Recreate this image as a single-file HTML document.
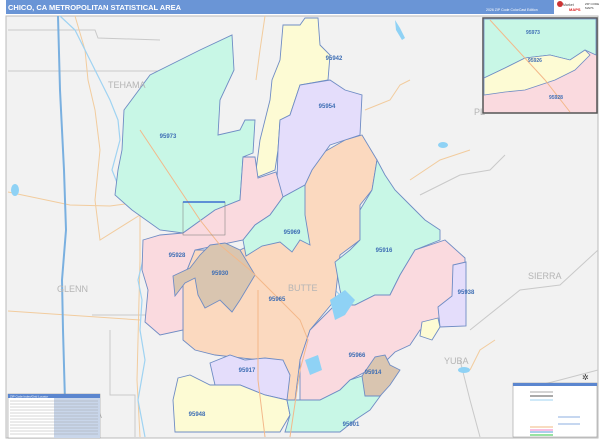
<!DOCTYPE html>
<html><head><meta charset="utf-8"><style>
html,body{margin:0;padding:0;width:600px;height:440px;overflow:hidden;background:#fff;font-family:"Liberation Sans",sans-serif}
</style></head><body>
<svg width="600" height="440" viewBox="0 0 600 440" xmlns="http://www.w3.org/2000/svg" font-family="Liberation Sans, sans-serif">
<rect width="600" height="440" fill="#ffffff"/>
<!-- header -->
<rect x="6" y="0" width="594" height="14" fill="#6a95d6"/>
<text x="8" y="10" font-size="7.5" font-weight="bold" fill="#fff">CHICO, CA METROPOLITAN STATISTICAL AREA</text>
<text x="486" y="11" font-size="3.5" fill="#fff">2026 ZIP Code ColorCast Edition</text>
<rect x="554" y="0" width="46" height="14" fill="#fff"/>
<circle cx="560" cy="4" r="3" fill="#c33"/>
<text x="563" y="6" font-size="3.5" fill="#444">Market</text>
<text x="569" y="11" font-size="4" font-weight="bold" fill="#d22">MAPS</text>
<text x="585" y="5" font-size="3" fill="#333">ZIP CODE</text>
<text x="585" y="9" font-size="3" fill="#333">MAPS</text>
<!-- map bg -->
<rect x="6" y="16" width="592" height="422" fill="#f2f2f2" stroke="#bbb" stroke-width="1"/>
<!-- county lines -->
<g fill="none" stroke="#c9c9c9" stroke-width="1">
<path d="M8 30 L95 30 L98 38 L160 40"/>
<path d="M8 71 L175 71"/>
<path d="M92 315 L175 315"/>
<path d="M135 437 L135 395 L110 395 L110 330"/>
<path d="M420 195 L460 175 L490 170 L505 155"/>
<path d="M470 330 L520 290 L560 285 L598 250"/>
<path d="M400 250 L420 230"/>
<path d="M460 360 L470 400 L480 437"/>
<path d="M515 395 L540 385 L560 380 L598 370"/>
</g>
<g fill="none" stroke="#f2cc9e" stroke-width="1">
<path d="M75 16 L85 50 L88 80 L95 110 L100 150 L95 200 L100 240 L140 215"/>
<path d="M8 192 L70 205 L110 206 L140 202"/>
<path d="M140 215 L140 260 L138 340 L137 380 L140 437"/>
<path d="M8 311 L140 320"/>
<path d="M265 16 L260 50 L256 80"/>
<path d="M365 110 L390 100 L400 85 L410 80"/>
<path d="M410 180 L440 160 L470 150"/>
<path d="M470 370 L480 350 L495 340"/>
</g>
<!-- I-5 -->
<path d="M58 16 L60 90 L64 170 L66 230 L62 280 L63 330 L66 437" stroke="#7ab0e0" stroke-width="2" fill="none"/>
<!-- rivers -->
<g fill="none" stroke="#9fd3f2" stroke-width="1.2">
<path d="M60 16 L75 30 L90 60 L100 80 L110 100 L118 120 L120 140 L112 170 L120 190"/>
<path d="M143 260 L138 280 L142 300 L140 330 L145 360 L138 400 L145 437"/>
<path d="M330 285 L345 300 L355 295 L370 290"/>
</g>
<!-- zones -->
<g stroke="#6f8cc4" stroke-width="0.9">
<path fill="#fbd9bf" d="M300 190 L310 160 L345 140 L362 135 L377 160 L372 190 L360 205 L360 240 L340 255 L335 300 L310 330 L300 360 L295 400 L270 400 L260 360 L215 355 L195 350 L183 340 L183 280 L195 250 L240 250 L260 240 L285 240 L300 220 Z"/>
<path fill="#c8f7e6" d="M122 150 L124 110 L150 75 L200 50 L232 35 L234 70 L220 100 L218 135 L240 130 L245 120 L255 120 L253 153 L243 157 L240 200 L215 210 L183 233 L160 230 L132 210 L115 195 L118 170 Z"/>
<path fill="#fdfbd4" d="M283 25 L300 25 L305 18 L318 18 L320 45 L330 55 L328 80 L300 85 L290 115 L280 120 L278 150 L275 170 L255 178 L260 140 L265 120 L270 100 L272 80 L280 60 Z"/>
<path fill="#e4ddfb" d="M300 85 L330 80 L345 90 L362 95 L360 135 L345 140 L330 145 L312 170 L305 185 L283 197 L277 180 L278 150 L280 120 L290 115 Z"/>
<path fill="#fadadf" d="M143 240 L160 235 L183 233 L215 210 L240 200 L243 157 L255 157 L258 178 L276 172 L283 197 L270 215 L255 225 L243 240 L195 250 L183 280 L183 330 L160 335 L145 322 L148 290 L142 270 Z"/>
<path fill="#c8f7e6" d="M243 240 L255 225 L270 215 L283 197 L305 185 L305 215 L310 245 L300 240 L292 252 L280 242 L262 246 L246 256 Z"/>
<path fill="#d9c5b0" d="M210 245 L225 243 L240 250 L255 275 L240 300 L232 312 L220 300 L205 308 L198 295 L195 278 L185 283 L175 296 L173 276 L190 268 L200 255 Z"/>
<path fill="#c8f7e6" d="M377 160 L385 175 L395 190 L410 205 L425 220 L440 230 L440 240 L415 250 L400 275 L390 295 L375 295 L355 305 L345 310 L340 290 L335 262 L350 250 L360 240 L360 210 L372 190 Z"/>
<path fill="#fadadf" d="M415 250 L445 240 L465 258 L465 280 L455 300 L445 320 L435 325 L420 330 L410 345 L395 352 L385 362 L365 372 L350 380 L340 390 L320 400 L300 400 L300 360 L310 330 L335 305 L355 305 L375 295 L390 295 L400 275 Z"/>
<path fill="#e4ddfb" d="M453 265 L466 262 L466 326 L440 327 L438 307 L452 296 Z"/>
<path fill="#fdfbd4" d="M422 322 L438 318 L440 327 L432 340 L420 336 Z"/>
<path fill="#e4ddfb" d="M210 363 L230 355 L245 360 L265 358 L283 360 L290 375 L287 400 L265 395 L240 385 L215 385 Z"/>
<path fill="#fdfbd4" d="M178 378 L190 375 L210 385 L240 385 L265 395 L287 400 L290 415 L280 432 L175 432 L173 400 Z"/>
<path fill="#c8f7e6" d="M287 400 L320 400 L340 390 L350 380 L365 375 L380 377 L381 395 L370 410 L355 420 L340 432 L285 432 L290 415 Z"/>
<path fill="#d9c5b0" d="M375 357 L385 355 L390 365 L400 370 L390 385 L380 396 L365 396 L362 376 Z"/>
</g>
<!-- lakes -->
<g fill="#8fd2f5">
<path d="M330 300 L345 290 L355 300 L345 315 L335 320 Z"/>
<path d="M305 360 L318 355 L322 370 L310 375 Z"/>
<ellipse cx="443" cy="145" rx="5" ry="3"/>
<path d="M395 20 L400 28 L405 38 L402 40 L396 30 Z"/>
<ellipse cx="464" cy="370" rx="6" ry="3"/>
<ellipse cx="15" cy="190" rx="4" ry="6"/>
</g>
<!-- highways -->
<g fill="none" stroke="#f3b88a" stroke-width="1">
<path d="M140 130 L180 190 L200 220 L220 245 L250 270 L280 300 L300 320 L308 340 L300 370 L290 437"/>
<path d="M258 290 L258 380 L265 437"/>
</g>
<!-- grid box -->
<rect x="183" y="202" width="42" height="33" fill="none" stroke="#888" stroke-width="0.6"/>
<line x1="183" y1="202" x2="225" y2="202" stroke="#3a6fd0" stroke-width="1.5"/>
<!-- zip labels -->
<g font-size="6" font-weight="bold" fill="#3e6eb4" text-anchor="middle">
<text x="168" y="138">95973</text>
<text x="334" y="60">95942</text>
<text x="327" y="108">95954</text>
<text x="177" y="257">95928</text>
<text x="220" y="275">95930</text>
<text x="292" y="234">95969</text>
<text x="384" y="252">95916</text>
<text x="277" y="301">95965</text>
<text x="357" y="357">95966</text>
<text x="247" y="372">95917</text>
<text x="373" y="374">95914</text>
<text x="197" y="416">95948</text>
<text x="351" y="426">95901</text>
<text x="466" y="294">95938</text>
</g>
<g font-size="9" fill="#b5b5b5">
<text x="108" y="88">TEHAMA</text>
<text x="57" y="292">GLENN</text>
<text x="528" y="279">SIERRA</text>
<text x="444" y="364">YUBA</text>
<text x="474" y="115">PL</text>
<text x="90" y="418">SA</text>
<text x="288" y="291">BUTTE</text>
</g>
<!-- inset -->
<g>
<rect x="483" y="18" width="114" height="95" fill="#fadadf" stroke="#555" stroke-width="1.5"/>
<path d="M484 19 L596 19 L596 55 L585 50 L570 60 L550 55 L525 58 L505 68 L484 78 Z" fill="#c8f7e6" stroke="#6f8cc4" stroke-width="0.8"/>
<path d="M484 78 L505 68 L525 58 L550 55 L570 60 L585 50 L590 55 L575 70 L555 80 L540 85 L525 90 L505 92 L484 95 Z" fill="#fdfbd4" stroke="#6f8cc4" stroke-width="0.8"/>
<path d="M490 20 L545 80 L570 112" stroke="#f3b88a" fill="none"/>
<g font-size="5" font-weight="bold" fill="#3e6eb4" text-anchor="middle">
<text x="533" y="34">95973</text>
<text x="535" y="62">95926</text>
<text x="556" y="99">95928</text>
</g>
</g>
<!-- left legend -->
<g>
<rect x="8" y="394" width="92" height="44" fill="#fff" stroke="#888" stroke-width="0.5"/>
<rect x="8" y="394" width="92" height="4" fill="#5b86cf"/>
<text x="10" y="397.3" font-size="3" fill="#fff">ZIP Code Index/Grid Locator</text>
<rect x="54" y="398" width="46" height="40" fill="#c9d6ea"/>
<g stroke="#999" stroke-width="0.4">
<line x1="10" y1="401" x2="98" y2="401"/><line x1="10" y1="404" x2="98" y2="404"/><line x1="10" y1="407" x2="98" y2="407"/><line x1="10" y1="410" x2="98" y2="410"/><line x1="10" y1="413" x2="98" y2="413"/><line x1="10" y1="416" x2="98" y2="416"/><line x1="10" y1="419" x2="98" y2="419"/><line x1="10" y1="422" x2="98" y2="422"/><line x1="10" y1="425" x2="98" y2="425"/><line x1="10" y1="428" x2="98" y2="428"/><line x1="10" y1="431" x2="98" y2="431"/><line x1="10" y1="434" x2="98" y2="434"/>
</g>
</g>
<!-- right legend -->
<g>
<rect x="513" y="383" width="84" height="54" fill="#fff" stroke="#888" stroke-width="0.5"/>
<rect x="513" y="383" width="84" height="3" fill="#5b86cf"/>
<line x1="530" y1="392" x2="553" y2="392" stroke="#aaa"/>
<line x1="530" y1="396" x2="553" y2="396" stroke="#777" stroke-width="1.3"/>
<line x1="530" y1="400" x2="553" y2="400" stroke="#9fd3f2"/>
<line x1="530" y1="427" x2="553" y2="427" stroke="#f3c89a" stroke-width="1.2"/>
<line x1="530" y1="430" x2="553" y2="430" stroke="#f49ad0" stroke-width="1.2"/>
<line x1="530" y1="432" x2="553" y2="432" stroke="#7ab0e0" stroke-width="1.2"/>
<line x1="530" y1="435" x2="553" y2="435" stroke="#5bd26b" stroke-width="1.2"/>
<path d="M558 417 L580 417 M558 424 L580 424" stroke="#6a95d6" stroke-width="0.7"/>
<text x="582" y="380" font-size="8" fill="#333">✲</text>
</g>
</svg>
</body></html>
